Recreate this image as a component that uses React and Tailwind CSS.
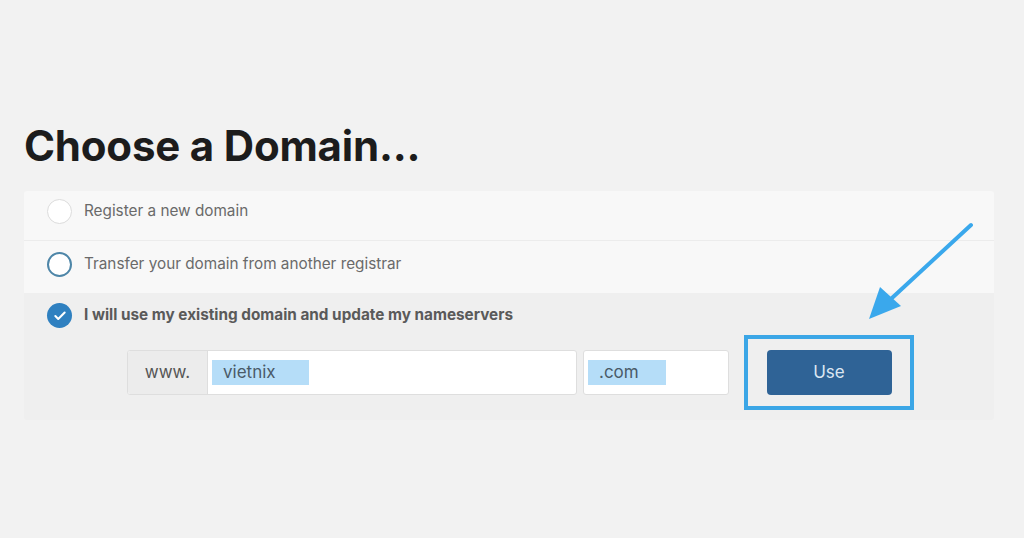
import { Check } from 'lucide-react';

function Radio({ state }) {
  if (state === 'checked') {
    return (
      <span className="flex h-[25px] w-[25px] shrink-0 items-center justify-center rounded-full bg-[#2f80c0]">
        <Check className="h-[14px] w-[14px] text-white" strokeWidth={3.5} />
      </span>
    );
  }
  return (
    <span
      className={
        state === 'focus'
          ? 'h-[25px] w-[25px] shrink-0 rounded-full border-2 border-[#4e86a8] bg-white'
          : 'h-[25px] w-[25px] shrink-0 rounded-full border border-[#dcdcdc] bg-white'
      }
    />
  );
}

export default function App() {
  return (
    <div
      className="relative h-[538px] w-[1024px] overflow-hidden bg-[#f2f2f2] text-[#222]"
      style={{ fontFamily: 'Inter, "Noto Sans", sans-serif' }}
    >
      <div className="px-[24px] pt-[121px]">
        <h1 className="text-[42px] font-bold leading-[50px] tracking-[-0.2px] text-[#1c1c1c]">
          Choose a Domain...
        </h1>

        <div className="mt-[20px] w-[970px] overflow-hidden rounded-[3px]">
          <div className="flex h-[50px] items-center gap-[12px] border-b border-[#ececec] bg-[#f8f8f8] pb-[8px] pl-[23px]">
            <Radio />
            <span className="text-[15.3px] text-[#6a6a6a]">Register a new domain</span>
          </div>
          <div className="flex h-[52px] items-center gap-[12px] bg-[#f8f8f8] pb-[6px] pl-[23px]">
            <Radio state="focus" />
            <span className="text-[15.3px] text-[#6a6a6a]">
              Transfer your domain from another registrar
            </span>
          </div>
          <div className="h-[127px] bg-[#efefef] pl-[23px] pt-[10px]">
            <div className="flex items-center gap-[12px]">
              <Radio state="checked" />
              <span className="text-[15.3px] font-bold text-[#5a5a5a]">
                I will use my existing domain and update my nameservers
              </span>
            </div>
            <div className="ml-[80px] mt-[7px] flex items-center">
              <div className="flex h-[45px] w-[450px] overflow-hidden rounded-[3px] border border-[#dedede] bg-white">
                <span className="flex w-[80px] items-center justify-center border-r border-[#dedede] bg-[#ececec] text-[17px] text-[#555]">
                  www.
                </span>
                <span className="flex items-center pl-[4px]">
                  <span className="flex h-[25px] w-[97px] items-center bg-[#b5ddf8] pl-[11px] text-[17px] text-[#4a5a68]">
                    vietnix
                  </span>
                </span>
              </div>
              <div className="ml-[6px] flex h-[45px] w-[146px] items-center rounded-[3px] border border-[#dedede] bg-white pl-[4px]">
                <span className="flex h-[25px] w-[78px] items-center bg-[#b5ddf8] pl-[11px] text-[17px] text-[#4a5a68]">
                  .com
                </span>
              </div>
              <div className="ml-[15px] flex h-[75px] w-[170px] items-center justify-center border-[4px] border-[#3ba6e6]">
                <button className="h-[45px] w-[125px] rounded-[4px] bg-[#2f6396] text-[17px] text-[#dbe6f2]">
                  Use
                </button>
              </div>
            </div>
          </div>
        </div>
      </div>

      <svg className="absolute left-0 top-0" width="1024" height="538">
        <line x1="971" y1="225" x2="892" y2="298" stroke="#3aa8ec" strokeWidth="4" strokeLinecap="round" />
        <polygon points="869,319 880,287 901,306" fill="#3aa8ec" />
      </svg>
    </div>
  );
}
